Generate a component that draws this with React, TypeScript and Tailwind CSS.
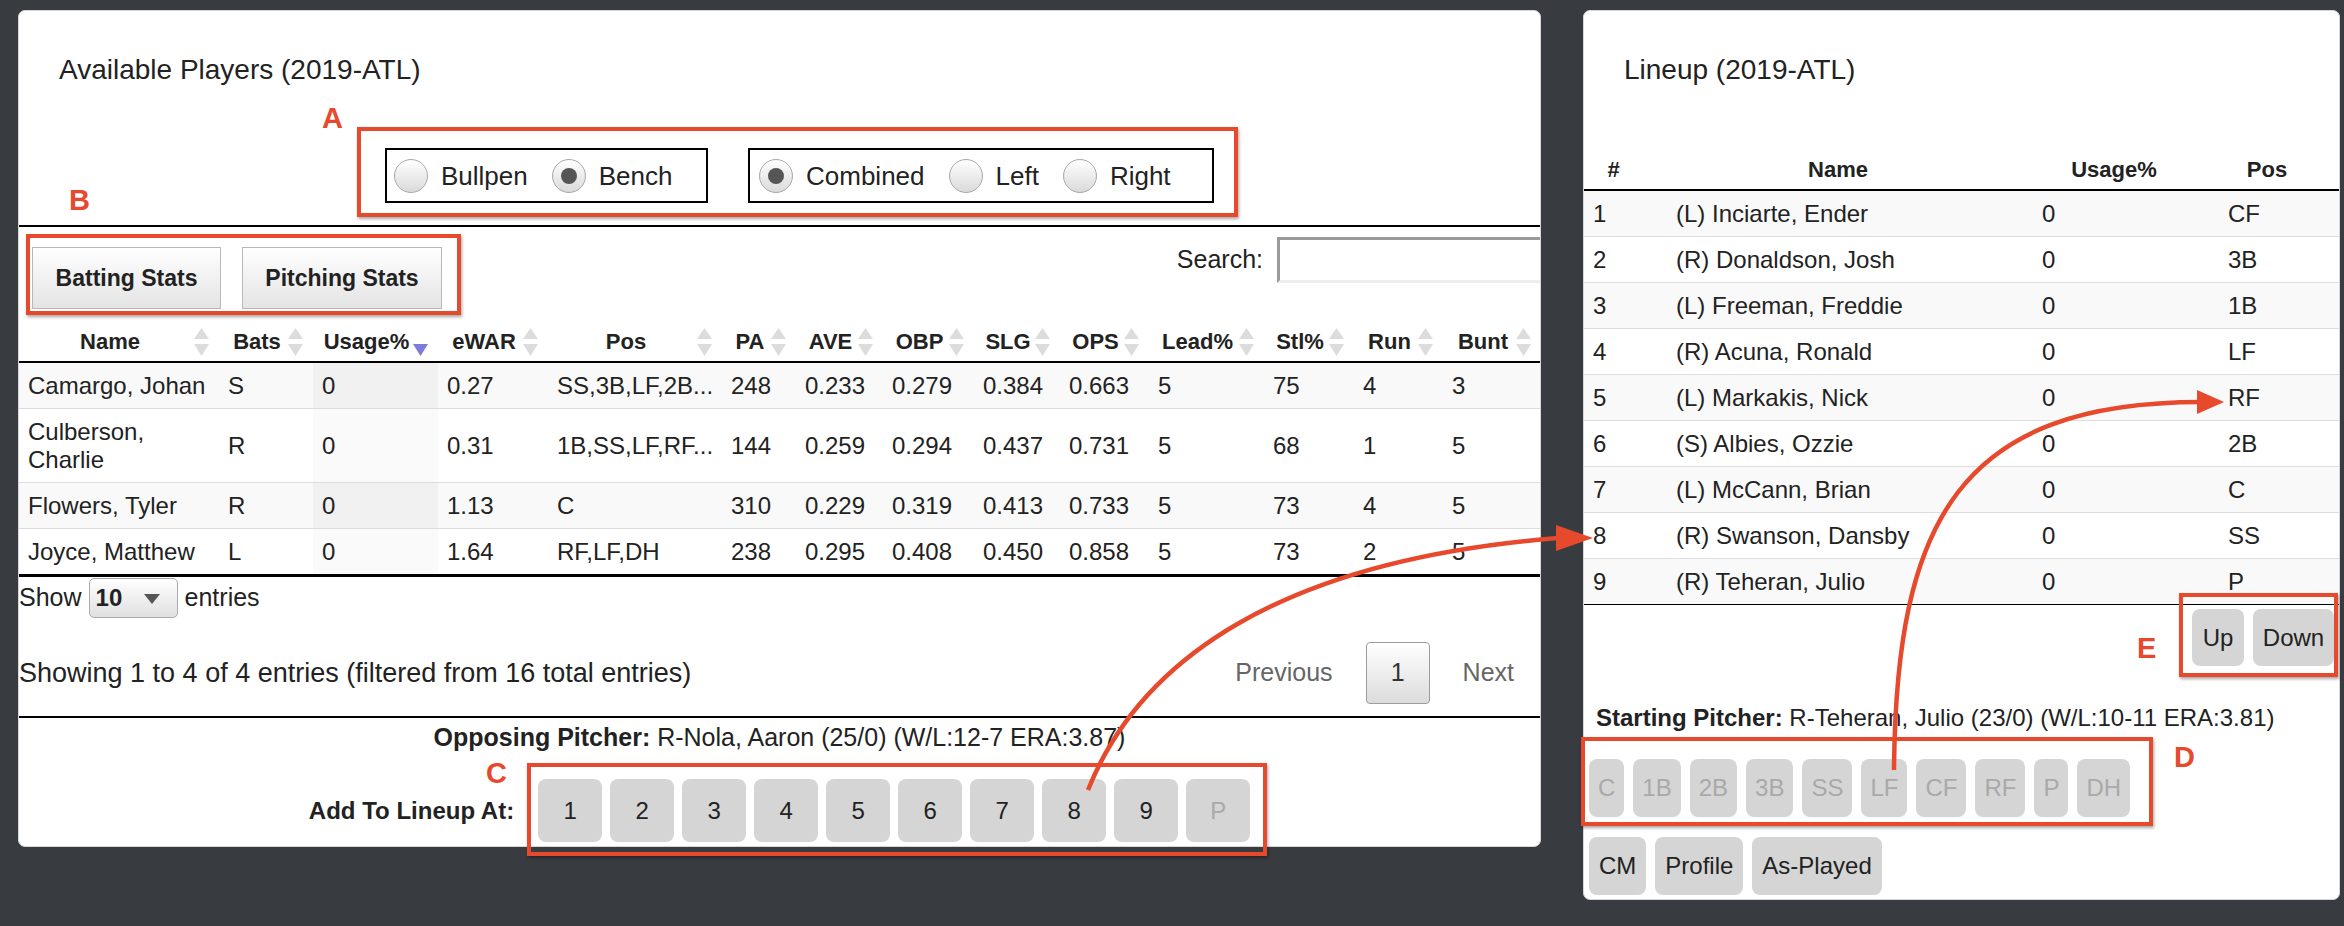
import React from 'react';

const players = [
    { name: 'Camargo, Johan', bats: 'S', usage: '0', ewar: '0.27', pos: 'SS,3B,LF,2B...', pa: '248', ave: '0.233', obp: '0.279', slg: '0.384', ops: '0.663', lead: '5', stl: '75', run: '4', bunt: '3' },
    { name: 'Culberson, Charlie', bats: 'R', usage: '0', ewar: '0.31', pos: '1B,SS,LF,RF...', pa: '144', ave: '0.259', obp: '0.294', slg: '0.437', ops: '0.731', lead: '5', stl: '68', run: '1', bunt: '5' },
    { name: 'Flowers, Tyler', bats: 'R', usage: '0', ewar: '1.13', pos: 'C', pa: '310', ave: '0.229', obp: '0.319', slg: '0.413', ops: '0.733', lead: '5', stl: '73', run: '4', bunt: '5' },
    { name: 'Joyce, Matthew', bats: 'L', usage: '0', ewar: '1.64', pos: 'RF,LF,DH', pa: '238', ave: '0.295', obp: '0.408', slg: '0.450', ops: '0.858', lead: '5', stl: '73', run: '2', bunt: '5' },
];

const columns = [
    { key: 'name', label: 'Name', w: 'w-[200px]' },
    { key: 'bats', label: 'Bats', w: 'w-[94px]' },
    { key: 'usage', label: 'Usage%', w: 'w-[125px]' },
    { key: 'ewar', label: 'eWAR', w: 'w-[110px]' },
    { key: 'pos', label: 'Pos', w: 'w-[174px]' },
    { key: 'pa', label: 'PA', w: 'w-[74px]' },
    { key: 'ave', label: 'AVE', w: 'w-[87px]' },
    { key: 'obp', label: 'OBP', w: 'w-[91px]' },
    { key: 'slg', label: 'SLG', w: 'w-[86px]' },
    { key: 'ops', label: 'OPS', w: 'w-[89px]' },
    { key: 'lead', label: 'Lead%', w: 'w-[115px]' },
    { key: 'stl', label: 'Stl%', w: 'w-[90px]' },
    { key: 'run', label: 'Run', w: 'w-[89px]' },
    { key: 'bunt', label: 'Bunt', w: 'w-[98px]' },
];

const lineup = [
    ['1', '(L) Inciarte, Ender', '0', 'CF'],
    ['2', '(R) Donaldson, Josh', '0', '3B'],
    ['3', '(L) Freeman, Freddie', '0', '1B'],
    ['4', '(R) Acuna, Ronald', '0', 'LF'],
    ['5', '(L) Markakis, Nick', '0', 'RF'],
    ['6', '(S) Albies, Ozzie', '0', '2B'],
    ['7', '(L) McCann, Brian', '0', 'C'],
    ['8', '(R) Swanson, Dansby', '0', 'SS'],
    ['9', '(R) Teheran, Julio', '0', 'P'],
];

function SortIcon({ active }: { active?: boolean }) {
    return (
        <svg width="17" height="28" viewBox="0 0 17 28" className="absolute right-[9px] top-[19px]">
            {!active && <polygon points="8.5,0 16,11 1,11" fill="#dcdcdc" />}
            <polygon points="1,16 16,16 8.5,28" fill={active ? '#7c7cdb' : '#dcdcdc'} />
        </svg>
    );
}

function Radio({ checked, label }: { checked?: boolean; label: string }) {
    return (
        <div className="flex items-center gap-[13px]">
            <div className="w-[34px] h-[34px] rounded-full border border-[#a8a8a8] bg-linear-to-b from-white to-[#dadada] flex items-center justify-center">
                {checked && <div className="w-[16px] h-[16px] rounded-full bg-[#555]" />}
            </div>
            <span className="text-[26px] leading-[30px]">{label}</span>
        </div>
    );
}

function GrayButton({ children, disabled, className = '' }: { children: React.ReactNode; disabled?: boolean; className?: string }) {
    return (
        <div className={`bg-[#d5d5d5] rounded-[8px] flex items-center justify-center text-[24px] ${disabled ? 'text-[#a9a9a9]' : 'text-[#222]'} ${className}`}>
            {children}
        </div>
    );
}

function RedBox({ className }: { className: string }) {
    return <div className={`absolute border-[4px] border-[#e6492c] shadow-[1px_2px_3px_rgba(0,0,0,0.35)] ${className}`} />;
}

function RedLetter({ children, className }: { children: string; className: string }) {
    return <div className={`absolute text-[29px] leading-[29px] font-black text-[#e6492c] ${className}`}>{children}</div>;
}

export default function App() {
    return (
        <div className="relative w-[2344px] h-[926px] overflow-hidden bg-[#383b40] font-['Liberation_Sans',Arial,sans-serif] text-[#222]">
            <div className="flex items-start gap-[42px] pt-[10px] pl-[18px]">

                {/* available players */}
                <div className="w-[1523px] h-[837px] bg-white rounded-[7px] border border-[#d6d6d6] overflow-hidden flex flex-col">
                    <h2 className="pt-[42px] pl-[40px] text-[28px] leading-[34px]">Available Players (2019-ATL)</h2>

                    <div className="mt-[61px] pl-[366px] flex gap-[40px]">
                        <div className="w-[323px] h-[55px] border-2 border-black flex items-center pl-[7px] gap-[24px]">
                            <Radio label="Bullpen" />
                            <Radio label="Bench" checked />
                        </div>
                        <div className="w-[466px] h-[55px] border-2 border-black flex items-center pl-[9px] gap-[24px]">
                            <Radio label="Combined" checked />
                            <Radio label="Left" />
                            <Radio label="Right" />
                        </div>
                    </div>

                    <div className="mt-[22px] h-[2px] bg-black" />

                    <div className="pt-[10px] pl-[13px] flex items-start">
                        <div className="mt-[10px] flex gap-[21px]">
                            <div className="w-[189px] h-[62px] border border-[#b8b8b8] bg-linear-to-b from-white to-[#e4e4e4] flex items-center justify-center text-[23px] font-bold">Batting Stats</div>
                            <div className="w-[200px] h-[62px] border border-[#b8b8b8] bg-linear-to-b from-white to-[#e4e4e4] flex items-center justify-center text-[23px] font-bold">Pitching Stats</div>
                        </div>
                        <div className="ml-auto -mr-[40px] flex items-center gap-[14px]">
                            <span className="text-[25px]">Search:</span>
                            <div className="w-[303px] h-[46px] border-[3px] border-t-[#9a9a9a] border-l-[#9a9a9a] border-r-[#eeeeee] border-b-[#eeeeee] bg-white" />
                        </div>
                    </div>

                    <table className="table-fixed border-collapse w-[1522px] text-left">
                        <colgroup>
                            {columns.map(c => <col key={c.key} className={c.w} />)}
                        </colgroup>
                        <thead>
                            <tr>
                                {columns.map(c =>
                                    <th key={c.key} className="relative pl-[10px] pr-[28px] pt-[20px] pb-[6px] text-center text-[22px] leading-[26px] font-bold border-b-2 border-black">
                                        {c.label}
                                        <SortIcon active={c.key === 'usage'} />
                                    </th>
                                )}
                            </tr>
                        </thead>
                        <tbody className="border-b-[3px] border-black">
                            {players.map((p, i) =>
                                <tr key={p.name} className={i % 2 === 0 ? 'bg-[#f9f9f9]' : 'bg-white'}>
                                    {columns.map(c =>
                                        <td key={c.key} className={`pl-[9px] pr-[2px] pt-[9px] pb-[8px] text-[24px] leading-[28px] ${c.key === 'name' ? 'whitespace-normal pr-[6px]' : 'whitespace-nowrap'} ${i < players.length - 1 ? 'border-b border-[#dddddd]' : ''} ${c.key === 'usage' ? (i % 2 === 0 ? 'bg-[#f1f1f1]' : 'bg-[#fafafa]') : ''}`}>
                                            {p[c.key as keyof typeof p]}
                                        </td>
                                    )}
                                </tr>
                            )}
                        </tbody>
                    </table>

                    <div className="mt-[1px] flex items-center gap-[7px]">
                        <span className="text-[25px]">Show</span>
                        <div className="relative w-[89px] h-[40px] rounded-[5px] border border-[#aaa] bg-linear-to-b from-white to-[#e0e0e0] flex items-center pl-[6px]">
                            <span className="text-[24px] font-bold">10</span>
                            <svg width="16" height="10" viewBox="0 0 16 10" className="absolute left-[54px] top-[15px]">
                                <polygon points="0,0 16,0 8,10" fill="#555" />
                            </svg>
                        </div>
                        <span className="text-[25px]">entries</span>
                    </div>

                    <div className="mt-[24px] flex items-center">
                        <span className="text-[27px]">Showing 1 to 4 of 4 entries (filtered from 16 total entries)</span>
                        <div className="ml-auto pr-[26px] flex items-center gap-[33px] text-[25px] text-[#666]">
                            <span>Previous</span>
                            <div className="w-[64px] h-[62px] rounded-[4px] border border-[#9c9c9c] bg-linear-to-b from-white to-[#dcdcdc] flex items-center justify-center text-[#333]">1</div>
                            <span>Next</span>
                        </div>
                    </div>

                    <div className="mt-[12px] h-[2px] bg-black" />

                    <p className="mt-[5px] text-center text-[25px] leading-[28px]">
                        <span className="font-bold">Opposing Pitcher:</span> R-Nola, Aaron (25/0) (W/L:12-7 ERA:3.87)
                    </p>

                    <div className="mt-[28px] flex justify-center items-center gap-[24px]">
                        <span className="text-[24px] font-bold">Add To Lineup At:</span>
                        <div className="flex gap-[8px]">
                            {['1', '2', '3', '4', '5', '6', '7', '8', '9'].map(n =>
                                <GrayButton key={n} className="w-[64px] h-[63px]">{n}</GrayButton>
                            )}
                            <GrayButton disabled className="w-[64px] h-[63px]">P</GrayButton>
                        </div>
                    </div>
                </div>

                {/* lineup */}
                <div className="w-[757px] h-[890px] bg-white rounded-[7px] border border-[#d6d6d6] overflow-hidden flex flex-col">
                    <h2 className="pt-[42px] pl-[40px] text-[28px] leading-[34px]">Lineup (2019-ATL)</h2>

                    <table className="mt-[62px] table-fixed border-collapse w-[755px] text-left">
                        <colgroup>
                            <col className="w-[83px]" />
                            <col className="w-[366px]" />
                            <col className="w-[186px]" />
                            <col className="w-[120px]" />
                        </colgroup>
                        <thead>
                            <tr>
                                {['#', 'Name', 'Usage%', 'Pos'].map(h =>
                                    <th key={h} className="pl-[9px] pr-[33px] pt-[8px] pb-[6px] text-center text-[22px] leading-[26px] font-bold border-b-2 border-black">{h}</th>
                                )}
                            </tr>
                        </thead>
                        <tbody className="border-b border-black">
                            {lineup.map((row, i) =>
                                <tr key={row[0]} className={i % 2 === 0 ? 'bg-[#f9f9f9]' : 'bg-white'}>
                                    {row.map((cell, j) =>
                                        <td key={j} className={`pl-[9px] pt-[9px] pb-[8px] text-[24px] leading-[28px] whitespace-nowrap ${i < lineup.length - 1 ? 'border-b border-[#dddddd]' : ''}`}>{cell}</td>
                                    )}
                                </tr>
                            )}
                        </tbody>
                    </table>

                    <div className="mt-[4px] pr-[5px] flex justify-end gap-[9px]">
                        <GrayButton className="w-[52px] h-[57px]">Up</GrayButton>
                        <GrayButton className="w-[81px] h-[57px]">Down</GrayButton>
                    </div>

                    <p className="mt-[38px] pl-[12px] text-[24px] leading-[28px] whitespace-nowrap">
                        <span className="font-bold">Starting Pitcher:</span> R-Teheran, Julio (23/0) (W/L:10-11 ERA:3.81)
                    </p>

                    <div className="mt-[27px] pl-[5px] flex gap-[9px]">
                        {['C', '1B', '2B', '3B', 'SS', 'LF', 'CF', 'RF', 'P', 'DH'].map(p =>
                            <GrayButton key={p} disabled className="h-[58px] px-[9px]">{p}</GrayButton>
                        )}
                    </div>

                    <div className="mt-[20px] pl-[5px] flex gap-[9px]">
                        <GrayButton className="h-[58px] px-[10px]">CM</GrayButton>
                        <GrayButton className="h-[58px] px-[10px]">Profile</GrayButton>
                        <GrayButton className="h-[58px] px-[10px]">As-Played</GrayButton>
                    </div>
                </div>
            </div>

            {/* annotations */}
            <div className="absolute inset-0 pointer-events-none">
                <RedBox className="left-[357px] top-[127px] w-[881px] h-[90px]" />
                <RedBox className="left-[26px] top-[234px] w-[435px] h-[81px]" />
                <RedBox className="left-[527px] top-[763px] w-[740px] h-[93px]" />
                <RedBox className="left-[1581px] top-[737px] w-[572px] h-[89px]" />
                <RedBox className="left-[2179px] top-[593px] w-[159px] h-[84px]" />
                <RedLetter className="left-[322px] top-[104px]">A</RedLetter>
                <RedLetter className="left-[69px] top-[186px]">B</RedLetter>
                <RedLetter className="left-[486px] top-[759px]">C</RedLetter>
                <RedLetter className="left-[2174px] top-[743px]">D</RedLetter>
                <RedLetter className="left-[2137px] top-[634px]">E</RedLetter>
                <svg width="2344" height="926" className="absolute left-0 top-0">
                    <path d="M1088,790 C1140,660 1280,560 1558,538" fill="none" stroke="#e6492c" strokeWidth="4.5" />
                    <polygon points="1593,538 1556,525 1556,551" fill="#e6492c" />
                    <path d="M1894,770 C1896,520 1960,402 2202,402" fill="none" stroke="#e6492c" strokeWidth="4.5" />
                    <polygon points="2224,402 2197,390 2197,414" fill="#e6492c" />
                </svg>
            </div>
        </div>
    );
}
